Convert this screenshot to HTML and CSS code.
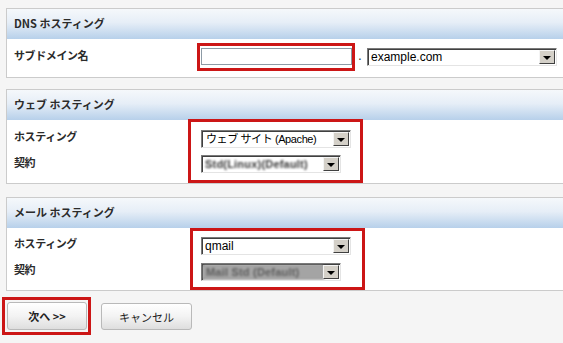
FILE: index.html
```html
<!doctype html>
<html lang="ja">
  <head>
    <meta charset="UTF-8" />
    <title>ホスティング設定</title>
    <link rel="stylesheet" href="styles.css">
  </head>
  <body>
    <div class="panel">
      <div class="panel-head">DNS ホスティング</div>
      <div class="panel-body body-dns">
        <div class="labels labels-dns">
          <div class="label">サブドメイン名</div>
        </div>
        <div class="mark mark-dns">
          <input type="text" class="text-input" />
        </div>
        <span class="dot">.</span>
        <div class="select select-domain">
          <span class="value">example.com</span>
          <span class="arrow"></span>
        </div>
      </div>
    </div>

    <div class="panel panel-web">
      <div class="panel-head">ウェブ ホスティング</div>
      <div class="panel-body body-web">
        <div class="labels labels-web">
          <div class="label">ホスティング</div>
          <div class="label">契約</div>
        </div>
        <div class="mark mark-web">
          <div class="select select-wide">
            <span class="value value-ja">ウェブ サイト (Apache)</span>
            <span class="arrow"></span>
          </div>
          <div class="select select-narrow">
            <span class="value blurred">Std(Linux)(Default)</span>
            <span class="arrow"></span>
          </div>
        </div>
      </div>
    </div>

    <div class="panel panel-mail">
      <div class="panel-head">メール ホスティング</div>
      <div class="panel-body body-mail">
        <div class="labels labels-mail">
          <div class="label">ホスティング</div>
          <div class="label">契約</div>
        </div>
        <div class="mark mark-mail">
          <div class="select select-wide">
            <span class="value">qmail</span>
            <span class="arrow"></span>
          </div>
          <div class="select select-narrow selected">
            <span class="value blurred">Mail Std (Default)</span>
            <span class="arrow"></span>
          </div>
        </div>
      </div>
    </div>

    <div class="actions">
      <div class="mark mark-btn">
        <button class="btn btn-next">次へ &gt;&gt;</button>
      </div>
      <button class="btn btn-cancel">キャンセル</button>
    </div>
  </body>
</html>
```

FILE: styles.css
```css
* {
  margin: 0;
  padding: 0;
  box-sizing: border-box;
}

body {
  background: #f5f5f5;
  color: #2b2b2b;
  font-family: "Noto Sans CJK JP", "DejaVu Sans", sans-serif;
  font-size: 11px;
  padding-top: 8px;
  overflow: hidden;
  width: 563px;
  height: 343px;
}

/* パネル */
.panel {
  margin-left: 6px;
  border: 1px solid #cbcbcb;
  border-right: 0;
  background: #fff;
}

.panel-web {
  margin-top: 11px;
}

.panel-mail {
  margin-top: 13px;
}

.panel-head {
  height: 30px;
  line-height: 29px;
  padding-left: 7px;
  font-weight: bold;
  background: linear-gradient(#f5f8fb, #e6eef7 45%, #b7d0ea);
}

.panel-body {
  display: flex;
  align-items: flex-start;
  padding-left: 7px;
}

.body-dns {
  height: 38px;
}

.body-web {
  height: 63px;
}

.body-mail {
  height: 62px;
}

.labels {
  padding-top: 3px;
  flex-shrink: 0;
}

.labels-dns {
  width: 183px;
}

.labels-web {
  width: 174px;
}

.labels-mail {
  width: 176px;
  padding-top: 2px;
}

.label {
  line-height: 26px;
  font-weight: bold;
  letter-spacing: -0.4px;
}

/* 赤枠 */
.mark {
  border: 3px solid #cc1616;
  flex-shrink: 0;
}

.mark-dns {
  margin-top: 4px;
  padding: 2px 0 3px 1px;
}

.mark-web {
  width: 175px;
  height: 64px;
  margin-top: -1px;
  padding: 8px 0 0 10px;
}

.mark-mail {
  width: 175px;
  height: 62px;
  padding: 6px 0 0 8px;
}

.mark-web .select + .select {
  margin-top: 7px;
}

.mark-mail .select + .select {
  margin-top: 8px;
}

.text-input {
  display: block;
  width: 151px;
  height: 17px;
  border: 1px solid #8d9ba6;
  background: #fff;
  outline: none;
}

.dot {
  width: 12px;
  padding-left: 3px;
  margin-top: 8px;
  line-height: 18px;
  font-family: "DejaVu Sans", sans-serif;
  font-size: 12px;
  color: #333;
}

/* セレクト (Windows クラシック風) */
.select {
  display: flex;
  height: 18px;
  border: 1px solid;
  border-color: #7a7a7a #e4e4e4 #e4e4e4 #7a7a7a;
  box-shadow: inset 1px 1px 0 #404040;
  background: #fff;
  overflow: hidden;
}

.select-domain {
  width: 190px;
  margin-top: 9px;
}

.select-wide {
  width: 150px;
}

.select-narrow {
  width: 140px;
}

.value {
  flex: 1;
  min-width: 0;
  padding: 1px 0 0 3px;
  font-family: "Liberation Sans", "Noto Sans CJK JP", sans-serif;
  font-size: 12px;
  line-height: 15px;
  white-space: nowrap;
  overflow: hidden;
  color: #000;
}

.value-ja {
  font-size: 11px;
  letter-spacing: -0.4px;
  padding-left: 4px;
}

.blurred {
  color: #3a3a3a;
  font-family: "Liberation Sans", sans-serif;
  font-size: 11px;
  font-weight: bold;
  letter-spacing: 0.2px;
  filter: blur(1.2px);
}

.selected .value {
  background: #a4a4a4;
  margin: 1px 0 1px 1px;
  padding-top: 0;
  outline: 1px dotted #333;
}

.selected .blurred {
  color: #5e5e5e;
  filter: blur(1px);
}

.arrow {
  position: relative;
  width: 16px;
  margin: 1px 1px 1px 0;
  background: #d4d0c8;
  border: 1px solid;
  border-color: #f4f4f4 #404040 #404040 #f4f4f4;
  flex-shrink: 0;
}

.arrow::after {
  content: "";
  position: absolute;
  left: 3px;
  top: 5px;
  border-left: 4px solid transparent;
  border-right: 4px solid transparent;
  border-top: 4px solid #000;
}

/* ボタン */
.actions {
  display: flex;
  align-items: flex-start;
  margin-top: 6px;
  padding-left: 2px;
}

.mark-btn {
  padding: 2px 1px 2px 2px;
}

.btn {
  display: block;
  border: 1px solid #b9b9b9;
  border-radius: 3px;
  background: linear-gradient(#ffffff, #f3f3f3 50%, #dedede);
  font-family: "Noto Sans CJK JP", sans-serif;
  font-size: 11px;
  color: #222;
}

.btn-next {
  width: 80px;
  height: 28px;
  font-weight: bold;
}

.btn-cancel {
  width: 91px;
  height: 27px;
  margin: 6px 0 0 10px;
}
```
